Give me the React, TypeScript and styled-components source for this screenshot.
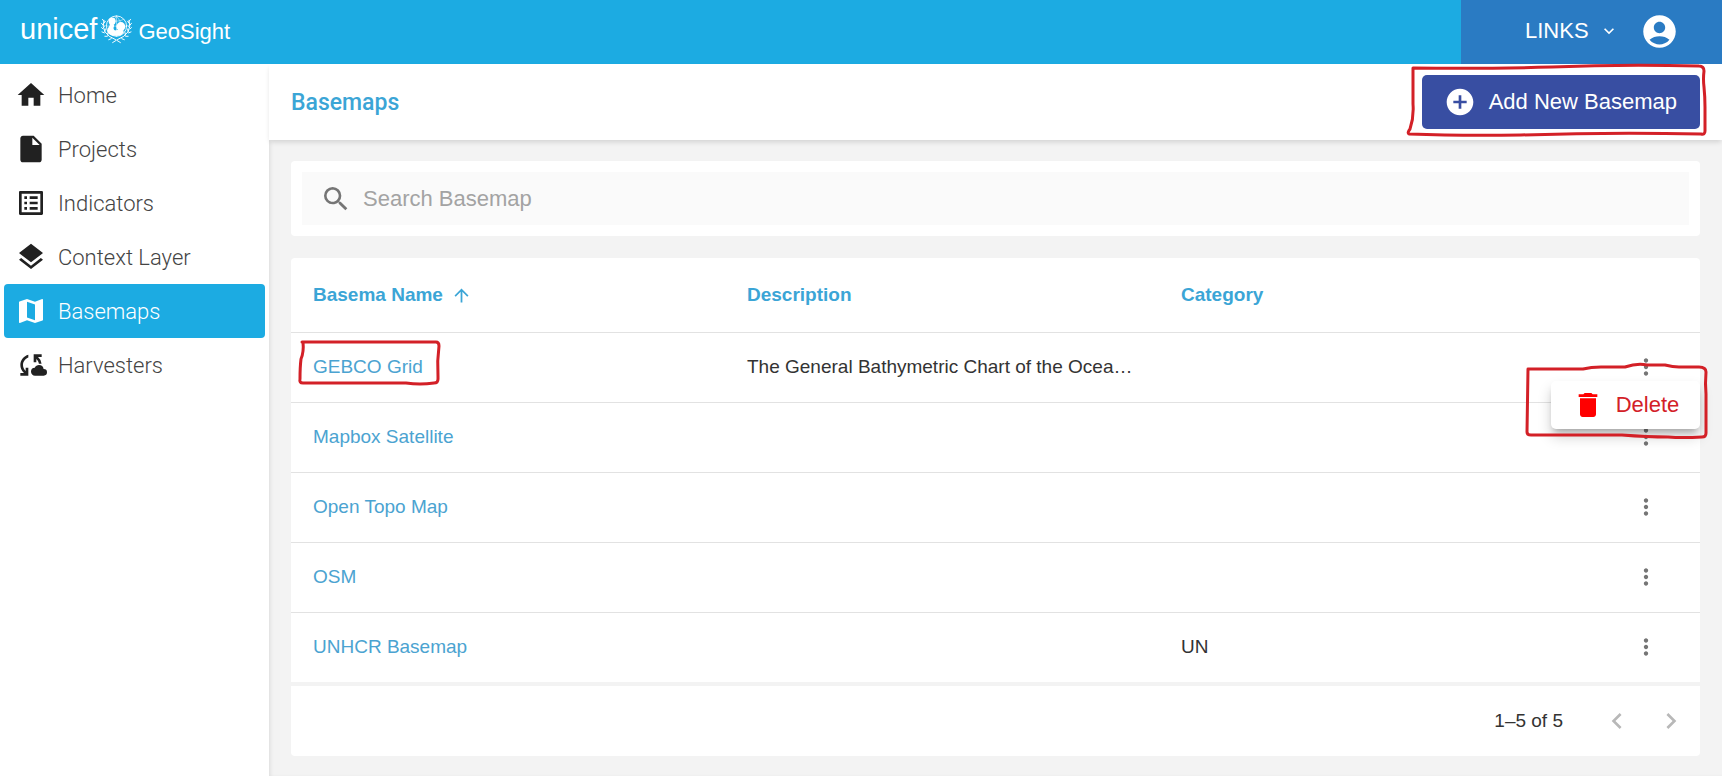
import React from 'react';
import styled, { createGlobalStyle } from 'styled-components';
import {
  MdHome, MdInsertDriveFile, MdListAlt, MdLayers, MdMap, MdCloudSync, MdSearch, MdMoreVert,
  MdDelete, MdAddCircle, MdAccountCircle, MdKeyboardArrowLeft, MdKeyboardArrowRight,
  MdKeyboardArrowDown, MdArrowUpward,
} from 'react-icons/md';

const Global = createGlobalStyle`
  *, *::before, *::after { box-sizing: border-box; }
  body { margin: 0; background: #f3f3f3; color: #333; font-family: "Liberation Sans", Arial, sans-serif; font-size: 19px; }
  button, input { font: inherit; }
  a { color: inherit; text-decoration: none; }
`;

const Page = styled.div`
  min-height: 100vh;
  display: flex;
  flex-direction: column;
`;

const TopBar = styled.header`
  height: 64px;
  display: flex;
  justify-content: space-between;
  background: #1cabe2;
  color: #fff;
`;

const Brand = styled.a`
  display: flex;
  align-items: center;
  padding: 0 20px 6px;
`;

const BrandName = styled.span`
  margin-right: 4px;
  font-size: 29px;
  line-height: 36px;
`;

const ProductName = styled.span`
  margin: 6px 0 0 6px;
  font-size: 22px;
  line-height: 28px;
`;

const Account = styled.div`
  width: 261px;
  padding: 0 43px 2px 64px;
  display: flex;
  align-items: center;
  justify-content: space-between;
  background: #2a7bc3;
`;

const PlainButton = styled.button`
  padding: 0;
  border: 0;
  background: none;
  color: inherit;
  display: inline-flex;
  align-items: center;
  justify-content: center;
  cursor: pointer;
`;

const LinksButton = styled(PlainButton)`
  gap: 10px;
  font-size: 22px;
`;

const Body = styled.div`
  flex: 1;
  display: flex;
`;

const Sidebar = styled.nav`
  width: 269px;
  flex: none;
  padding: 4px;
  background: #fff;
`;

const NavItem = styled.a<{ $active?: boolean }>`
  height: 54px;
  padding: 0 11px;
  display: flex;
  align-items: center;
  gap: 11px;
  border-radius: 4px;
  background: ${(p) => (p.$active ? '#1cabe2' : 'transparent')};
  color: ${(p) => (p.$active ? '#fff' : '#444')};
  font-family: Roboto, sans-serif;
  font-weight: 300;
  font-size: 22px;
  svg { color: ${(p) => (p.$active ? '#fff' : '#212121')}; }
`;

const Main = styled.main`
  flex: 1;
  min-width: 0;
  box-shadow: inset 3px 0 4px -2px rgba(0, 0, 0, 0.1);
`;

const TitleBar = styled.div`
  height: 76px;
  padding: 0 22px;
  display: flex;
  align-items: center;
  justify-content: space-between;
  background: #fff;
  box-shadow: 0 3px 5px -1px rgba(0, 0, 0, 0.14);
`;

const Title = styled.h1`
  margin: 0;
  color: #3ba5d6;
  font-family: Roboto, sans-serif;
  font-weight: 500;
  font-size: 23px;
`;

const Marked = styled.span`
  position: relative;
  display: inline-flex;
`;

const Pen = styled.svg`
  position: absolute;
  overflow: visible;
  pointer-events: none;
  fill: none;
  stroke: #d32027;
  stroke-width: 3;
  stroke-linecap: round;
  stroke-linejoin: round;
  left: 0;
  top: 0;
`;

const AddButton = styled(PlainButton)`
  height: 54px;
  padding: 0 23px 0 22px;
  gap: 13px;
  border-radius: 5px;
  background: #384ea2;
  color: #fff;
  font-size: 22px;
`;

const Content = styled.div`
  padding: 21px 22px 20px;
  display: flex;
  flex-direction: column;
`;

const SearchCard = styled.div`
  padding: 11px;
  margin-bottom: 22px;
  border-radius: 4px;
  background: #fff;
`;

const SearchBox = styled.label`
  height: 53px;
  padding: 0 18px;
  display: flex;
  align-items: center;
  gap: 11px;
  background: #fafafa;
  color: #757575;
`;

const SearchInput = styled.input`
  flex: 1;
  padding: 0;
  border: 0;
  outline: 0;
  background: none;
  font-size: 22px;
  &::placeholder { color: #a3a3a3; opacity: 1; }
`;

const Table = styled.table`
  width: 100%;
  table-layout: fixed;
  border-spacing: 0;
  border-radius: 4px 4px 0 0;
  background: #fff;
  th, td { padding: 0 22px; text-align: left; }
  tbody td { height: 70px; padding-bottom: 2px; border-top: 1px solid #e2e2e2; }
`;

const HeadCell = styled.th`
  height: 74px;
  color: #3ba5d6;
  font-size: 19px;
`;

const SortButton = styled(PlainButton)`
  gap: 8px;
  font-weight: bold;
`;

const DataColumn = styled.col`
  width: 434px;
`;

const TextCell = styled.td`
  white-space: nowrap;
`;

const NameCell = styled.td`
  color: #4ba3d1;
`;

const ActionCell = styled.td`
  && { padding-right: 41px; text-align: right; }
  color: #757575;
`;

const ActionAnchor = styled.span`
  position: relative;
  display: inline-flex;
  vertical-align: middle;
`;

const Menu = styled.div`
  position: absolute;
  z-index: 1;
  top: 27px;
  right: -41px;
  width: 149px;
  height: 48px;
  display: flex;
  border-radius: 5px;
  background: #fff;
  box-shadow: 0 5px 6px -3px rgba(0, 0, 0, 0.25), 0 8px 14px rgba(0, 0, 0, 0.18);
`;

const DeleteButton = styled(PlainButton)`
  flex: 1;
  gap: 12px;
  color: #d32027;
  font-size: 22px;
  svg { color: #f00; }
`;

const Footer = styled.footer`
  height: 70px;
  margin-top: 4px;
  padding: 0 13px;
  display: flex;
  align-items: center;
  justify-content: flex-end;
  border-radius: 0 0 4px 4px;
  background: #fff;
`;

const PagerButton = styled(PlainButton)`
  margin-left: 22px;
  color: #b8b8b8;
`;

const PageRange = styled.span`
  margin-right: 16px;
`;

const Emblem = () => (
  <svg width="31" height="30" viewBox="0 0 32 30" fill="none" stroke="#fff" strokeLinecap="round" aria-hidden="true">
    <circle cx="16" cy="12" r="10.5" strokeWidth=".9" />
    <path d="M5.500 12h21M16 1.500v21M8.500 5q7.500 4 15 0M8.500 19q7.500-4 15 0M16 1.500q-10 10.500 0 21M16 1.500q10 10.500 0 21" strokeWidth=".5" />
    <path d="M3 6Q-1 20 15 26M29 6Q33 20 17 26M12 29l4-2.500 4 2.500" strokeWidth="1" />
    <path d="M3 7L1.500 5M2 11L.5 9M2 15L.5 13.500M3.500 19L1 18M6.500 22.500L4 22.500M10.500 25L8 26M29 7l1.500-2M30 11l1.500-2M30 15l1.500-1.500M28.500 19l2.500-1M25.500 22.500l2.500 0M21.500 25l2.500 1M3 9l1.500-2M2.500 13.500L4 11.500M4 17.500l.5-2.500M7 21.500l0-2.500M29 9l-1.500-2M29.500 13.500L28 11.500M28 17.500l-.5-2.500M25 21.500v-2.500" strokeWidth="1" />
    <g fill="#fff" stroke="none">
      <ellipse cx="11.500" cy="7" rx="3.600" ry="3.800" />
      <circle cx="20.500" cy="12.500" r="4.600" />
      <path d="M9 9q5 0 4.500 3-1.500 3.500 1 4.500l5-1 4 1q-.5 5.500-6.500 5.500-9 .5-10.500-4.500 0-3 1.500-4.500 1.500-2 1-4z" />
    </g>
  </svg>
);

const navItems = [
  { label: 'Home', Icon: MdHome },
  { label: 'Projects', Icon: MdInsertDriveFile },
  { label: 'Indicators', Icon: MdListAlt },
  { label: 'Context Layer', Icon: MdLayers },
  { label: 'Basemaps', Icon: MdMap, active: true },
  { label: 'Harvesters', Icon: MdCloudSync },
];

const rows = [
  { name: 'GEBCO Grid', description: 'The General Bathymetric Chart of the Ocea…', category: '', open: true },
  { name: 'Mapbox Satellite', description: '', category: '' },
  { name: 'Open Topo Map', description: '', category: '' },
  { name: 'OSM', description: '', category: '' },
  { name: 'UNHCR Basemap', description: '', category: 'UN' },
];

export default function App() {
  return (
    <Page>
      <Global />
      <TopBar>
        <Brand href="#">
          <BrandName>unicef</BrandName>
          <Emblem />
          <ProductName>GeoSight</ProductName>
        </Brand>
        <Account>
          <LinksButton>LINKS <MdKeyboardArrowDown size={20} /></LinksButton>
          <PlainButton aria-label="Account"><MdAccountCircle size={39} /></PlainButton>
        </Account>
      </TopBar>
      <Body>
        <Sidebar>
          {navItems.map(({ label, Icon, active }) => (
            <NavItem href="#" key={label} $active={active}><Icon size={32} />{label}</NavItem>
          ))}
        </Sidebar>
        <Main>
          <TitleBar>
            <Title>Basemaps</Title>
            <Marked>
              <AddButton><MdAddCircle size={32} />Add New Basemap</AddButton>
              <Pen width="279" height="54" aria-hidden="true">
                <path d="M-9-7Q60-6 130-8 200-11 277-9q5 0 5 5-1 8 0 16 1 10 1 20v24q0 4-4 3-90-2-180 1-60 1-112-1-2-1 1-5 4-12 3-25z" />
              </Pen>
            </Marked>
          </TitleBar>
          <Content>
            <SearchCard>
              <SearchBox>
                <MdSearch size={32} />
                <SearchInput placeholder="Search Basemap" aria-label="Search Basemap" />
              </SearchBox>
            </SearchCard>
            <Table>
              <colgroup><DataColumn /><DataColumn /><DataColumn /><col /></colgroup>
              <thead>
                <tr>
                  <HeadCell><SortButton>Basema Name <MdArrowUpward size={21} /></SortButton></HeadCell>
                  <HeadCell>Description</HeadCell>
                  <HeadCell>Category</HeadCell>
                  <HeadCell />
                </tr>
              </thead>
              <tbody>
                {rows.map((row) => (
                  <tr key={row.name}>
                    <NameCell>
                      <Marked>
                        <a href="#">{row.name}</a>
                        {row.open && (
                          <Pen width="110" height="21" aria-hidden="true">
                            <path d="M-11-14H123q3 0 3 4-2 15-1 30v3q0 4-4 4-14 2-28 0H-10q-4 0-3-4 0-12 1-20 3-7 2-17" />
                          </Pen>
                        )}
                      </Marked>
                    </NameCell>
                    <TextCell>{row.description}</TextCell>
                    <TextCell>{row.category}</TextCell>
                    <ActionCell>
                      <ActionAnchor>
                        <PlainButton aria-label={`Actions for ${row.name}`}><MdMoreVert size={26} /></PlainButton>
                        {row.open && (
                          <Menu role="menu">
                            <DeleteButton role="menuitem"><MdDelete size={32} />Delete</DeleteButton>
                            <Pen width="149" height="48" aria-hidden="true">
                              <path d="M-23-12H32q8-2 18-2h24q12-4 22-2h18q8 2 14 2h20q7 0 7 5-1 12 0 22v39q0 4-4 4-20 1-34 0-20 0-46-2H-20q-4 0-4-3z" />
                            </Pen>
                          </Menu>
                        )}
                      </ActionAnchor>
                    </ActionCell>
                  </tr>
                ))}
              </tbody>
            </Table>
            <Footer>
              <PageRange>1–5 of 5</PageRange>
              <PagerButton aria-label="Previous page"><MdKeyboardArrowLeft size={32} /></PagerButton>
              <PagerButton aria-label="Next page"><MdKeyboardArrowRight size={32} /></PagerButton>
            </Footer>
          </Content>
        </Main>
      </Body>
    </Page>
  );
}
